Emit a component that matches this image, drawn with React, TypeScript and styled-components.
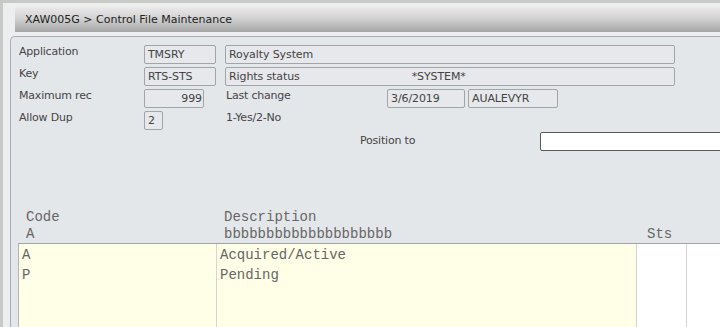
import React from "react";
import styled, { createGlobalStyle } from "styled-components";

const GlobalStyle = createGlobalStyle`
  html, body { margin: 0; padding: 0; }
  body {
    background: #c6c9c6;
    overflow: hidden;
    font-family: "DejaVu Sans", Verdana, sans-serif;
  }
`;

const Frame = styled.div`
  box-sizing: border-box;
  width: 717px;
  height: 324px;
  margin-top: 3px;
  margin-left: 3px;
  background: #eceef0;
  display: flex;
  flex-direction: column;
  overflow: hidden;
  border-top: 1px solid transparent;
`;

const TitleRow = styled.div`
  display: flex;
  padding-top: 2px;
  padding-left: 12px;
`;

const TitleBar = styled.div`
  box-sizing: border-box;
  flex: 1;
  height: 26px;
  display: flex;
  align-items: center;
  padding-left: 10px;
  background: linear-gradient(#ececec 0%, #d4d4d4 45%, #a6a6a6 100%);
  color: #222;
  font-size: 11px;
  letter-spacing: 0;
  border-top-left-radius: 2px;
`;

const Panel = styled.div`
  margin: 4px 0 0 7px;
  flex: 1;
  background: #e4e7ea;
  border-top: 1px solid #a9adb1;
  border-left: 1px solid #a9adb1;
  border-top-left-radius: 5px;
  display: flex;
  flex-direction: column;
  padding: 6px 0 0 8px;
`;

const Row = styled.div<{ $top?: number }>`
  display: flex;
  align-items: flex-start;
  height: 22px;
  margin-top: ${(p) => p.$top ?? 0}px;
`;

const Label = styled.div<{ $w?: number; $ml?: number }>`
  width: ${(p) => (p.$w ? `${p.$w}px` : "auto")};
  margin-left: ${(p) => p.$ml ?? 0}px;
  margin-top: 2px;
  flex: none;
  font-size: 11px;
  letter-spacing: -0.2px;
  line-height: 14px;
  color: #444;
  white-space: nowrap;
`;

const Box = styled.div<{ $w: number; $right?: boolean; $ml?: number }>`
  box-sizing: border-box;
  width: ${(p) => p.$w}px;
  height: 19px;
  margin-top: 2px;
  margin-left: ${(p) => p.$ml ?? 0}px;
  flex: none;
  border: 1px solid #a2a5a8;
  border-radius: 2px;
  background: #e6e8eb;
  font-size: 11px;
  letter-spacing: -0.1px;
  line-height: 17px;
  color: #444;
  padding: 0 ${(p) => (p.$right ? "1px" : "3px")} 0 3px;
  text-align: ${(p) => (p.$right ? "right" : "left")};
  white-space: pre;
  overflow: hidden;
`;

const Gap = styled.span<{ $w: number }>`
  display: inline-block;
  width: ${(p) => p.$w}px;
`;

const PositionInput = styled.input<{ $ml: number }>`
  box-sizing: border-box;
  width: 190px;
  height: 19px;
  margin-left: ${(p) => p.$ml}px;
  flex: none;
  border: 1px solid #5a5a5a;
  border-radius: 2px;
  background: #fff;
  padding: 0 3px;
  outline: none;
`;

const GridHead = styled.div`
  margin-top: 55px;
  margin-left: -1px;
  border-left: 1px solid transparent;
  display: grid;
  grid-template-columns: 198px 420px 50px 1fr;
  font-family: "Liberation Mono", "Courier New", monospace;
  font-size: 14px;
  line-height: 17px;
  color: #666;
`;

const HeadCell = styled.div<{ $pl: number; $row: number; $col: number }>`
  grid-row: ${(p) => p.$row};
  grid-column: ${(p) => p.$col};
  padding-left: ${(p) => p.$pl}px;
  white-space: pre;
`;

const Grid = styled.div`
  margin-left: -1px;
  flex: 1;
  border-top: 1px solid #a3a3a3;
  border-left: 1px solid #b4b4b4;
  display: grid;
  grid-template-columns: 198px 420px 50px 1fr;
  grid-template-rows: 21px 20px 1fr;
  font-family: "Liberation Mono", "Courier New", monospace;
  font-size: 14px;
  line-height: 20px;
  color: #666;
`;

const Col = styled.div<{ $col: number; $bg: string; $sep?: boolean }>`
  grid-row: 1 / -1;
  grid-column: ${(p) => p.$col};
  background: ${(p) => p.$bg};
  border-right: ${(p) => (p.$sep ? "1px solid #d4d4d4" : "none")};
`;

const Cell = styled.div<{ $row: number; $col: number }>`
  grid-row: ${(p) => p.$row};
  grid-column: ${(p) => p.$col};
  align-self: end;
  padding-left: 3px;
  white-space: pre;
`;

const rows = [
  { code: "A", desc: "Acquired/Active" },
  { code: "P", desc: "Pending" },
];

export default function App() {
  return (
    <>
      <GlobalStyle />
      <Frame>
        <TitleRow>
          <TitleBar>XAW005G &gt; Control File Maintenance</TitleBar>
        </TitleRow>
        <Panel>
          <Row>
            <Label $w={125}>Application</Label>
            <Box $w={72}>TMSRY</Box>
            <Box $w={450} $ml={9}>Royalty System</Box>
          </Row>
          <Row>
            <Label $w={125}>Key</Label>
            <Box $w={72}>RTS-STS</Box>
            <Box $w={450} $ml={9}>
              Rights status<Gap $w={112} />*SYSTEM*
            </Box>
          </Row>
          <Row>
            <Label $w={125}>Maximum rec</Label>
            <Box $w={60} $right>999</Box>
            <Label $ml={22} $w={161}>Last change</Label>
            <Box $w={78}>3/6/2019</Box>
            <Box $w={90} $ml={3}>AUALEVYR</Box>
          </Row>
          <Row>
            <Label $w={125}>Allow Dup</Label>
            <Box $w={19}>2</Box>
            <Label $ml={63}>1-Yes/2-No</Label>
          </Row>
          <Row $top={1}>
            <Label $ml={341}>Position to</Label>
            <PositionInput $ml={125} readOnly value="" />
          </Row>
          <GridHead>
            <HeadCell $row={1} $col={1} $pl={7}>Code</HeadCell>
            <HeadCell $row={1} $col={2} $pl={7}>Description</HeadCell>
            <HeadCell $row={2} $col={1} $pl={7}>A</HeadCell>
            <HeadCell $row={2} $col={2} $pl={7}>bbbbbbbbbbbbbbbbbbbb</HeadCell>
            <HeadCell $row={2} $col={3} $pl={10}>Sts</HeadCell>
          </GridHead>
          <Grid>
            <Col $col={1} $bg="#fffee6" $sep />
            <Col $col={2} $bg="#fffee6" $sep />
            <Col $col={3} $bg="#ffffff" $sep />
            <Col $col={4} $bg="#ffffff" />
            {rows.map((r, i) => (
              <React.Fragment key={r.code}>
                <Cell $row={i + 1} $col={1}>{r.code}</Cell>
                <Cell $row={i + 1} $col={2}>{r.desc}</Cell>
              </React.Fragment>
            ))}
          </Grid>
        </Panel>
      </Frame>
    </>
  );
}
